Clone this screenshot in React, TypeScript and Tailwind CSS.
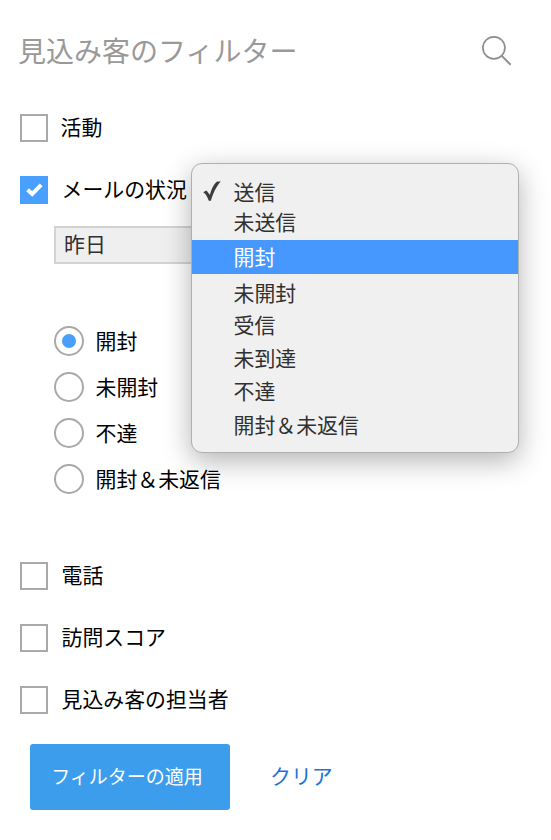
import { useState } from 'react';
import clsx from 'clsx';

const MENU_OPTIONS = [
  { label: '送信', height: 'h-[31px] pb-0.5' },
  { label: '未送信', height: 'h-8 pb-1' },
  { label: '開封', height: 'h-[34px] pb-px mb-[3px]' },
  { label: '未開封', height: 'h-[33px] pb-0.5' },
  { label: '受信', height: 'h-[33px] pb-1' },
  { label: '未到達', height: 'h-[33px] pb-1' },
  { label: '不達', height: 'h-[33px] pb-1' },
  { label: '開封＆未返信', height: 'h-[33px] pb-0.5' },
];

const EMAIL_STATES = ['開封', '未開封', '不達', '開封＆未返信'];

interface FilterRowProps {
  label: string;
  checked: boolean;
  onToggle: () => void;
  labelClassName?: string;
}

function FilterRow({ label, checked, onToggle, labelClassName = 'ml-[13.5px]' }: FilterRowProps) {
  return (
    <button
      type="button"
      role="checkbox"
      aria-checked={checked}
      onClick={onToggle}
      className="flex h-7 items-center text-black"
    >
      <span
        className={clsx(
          'flex size-7 shrink-0 items-center justify-center',
          checked ? 'bg-[#489ffe]' : 'border-2 border-[#a9a9a9] bg-white'
        )}
      >
        {checked && (
          <svg width="28" height="28" viewBox="0 0 28 28" fill="none" stroke="#fff" strokeWidth="4">
            <path d="M7.6 13.8L12.2 18L21.2 8.8" />
          </svg>
        )}
      </span>
      <span className={clsx('pb-[3px] leading-[25px] whitespace-nowrap', labelClassName)}>{label}</span>
    </button>
  );
}

function StatusMenu() {
  const [active, setActive] = useState(2);

  return (
    <ul className="absolute -top-[63px] left-[137px] z-10 w-[328px] rounded-[11px] border border-[#b0b0b0] bg-[#f0f0f0] pt-[13px] pb-[10px] text-[#303030] shadow-[0_8px_28px_rgba(0,0,0,0.3)]">
      {MENU_OPTIONS.map((option, i) => (
        <li
          key={option.label}
          onMouseEnter={() => setActive(i)}
          className={clsx(
            'flex items-center whitespace-nowrap',
            option.height,
            i === active && 'bg-[#4698ff] text-white'
          )}
        >
          <span className="w-[41.5px] shrink-0 pl-[11px]">
            {i === 0 && (
              <svg width="18" height="21" viewBox="0 0 18 21" fill="#3c3c3e" className="-mt-px">
                <path d="M0.3 11.2L3.2 9.4C4.8 10.8 5.8 12.2 6.8 14C8.3 8.2 10.6 3.6 13.4 1C14.4 0.2 16 0.4 17.8 0.4C13.4 5 10 12.2 7.9 19.8H5.8C4.6 16.2 2.8 12.8 0.3 11.2Z" />
              </svg>
            )}
          </span>
          {option.label}
        </li>
      ))}
    </ul>
  );
}

export default function App() {
  const [filters, setFilters] = useState<Record<string, boolean>>({ email: true });
  const [emailState, setEmailState] = useState('開封');

  const toggle = (key: string) => setFilters(prev => ({ ...prev, [key]: !prev[key] }));

  return (
    <div className="h-[840px] w-[551px] overflow-hidden bg-white font-['Noto_Sans_CJK_JP',sans-serif] text-[20.9px]">
      <header className="flex h-[102px] items-center justify-between pr-[38px] pl-[18px]">
        <h1 className="pb-0.5 text-[28px] leading-10 whitespace-nowrap text-[#999]">見込み客のフィルター</h1>
        <button type="button" aria-label="検索">
          <svg width="32" height="32" viewBox="0 0 32 32" fill="none" stroke="#8f8f8f" strokeWidth="1.7">
            <circle cx="12.9" cy="12.8" r="11" />
            <path d="M20.6 20.6L29.6 29.8" strokeWidth="2" />
          </svg>
        </button>
      </header>

      <main className="pl-5">
        <div className="mt-3 flex flex-col items-start gap-[34px]">
          <FilterRow label="活動" checked={!!filters.activity} onToggle={() => toggle('activity')} labelClassName="ml-[12.5px]" />
          <FilterRow label="メールの状況" checked={!!filters.email} onToggle={() => toggle('email')} />
        </div>

        <section className="mt-[22px] ml-[34px]">
          <div className="relative">
            <div className="flex h-[38px] w-[280px] items-center border-2 border-[#d3d3d3] bg-[#efefef] pb-0.5 pl-2 text-[#303030]">
              昨日
            </div>
            <StatusMenu />
          </div>

          <div className="mt-[62px] flex flex-col items-start gap-4">
            {EMAIL_STATES.map(state => (
              <button
                key={state}
                type="button"
                role="radio"
                aria-checked={emailState === state}
                onClick={() => setEmailState(state)}
                className="flex h-[30px] items-center text-black"
              >
                <span className="flex size-[30px] items-center justify-center rounded-full border-2 border-[#a9a9a9] bg-white">
                  {emailState === state && <span className="size-[14px] rounded-full bg-[#489ffe]" />}
                </span>
                <span className="ml-[11.5px] pb-0.5 leading-7 whitespace-nowrap">{state}</span>
              </button>
            ))}
          </div>
        </section>

        <div className="mt-[68px] flex flex-col items-start gap-[34px]">
          <FilterRow label="電話" checked={!!filters.phone} onToggle={() => toggle('phone')} />
          <FilterRow label="訪問スコア" checked={!!filters.score} onToggle={() => toggle('score')} />
          <FilterRow label="見込み客の担当者" checked={!!filters.owner} onToggle={() => toggle('owner')} />
        </div>

        <footer className="mt-[30px] ml-[10px] flex items-center">
          <button type="button" className="h-[66px] w-[200px] rounded-[3px] bg-[#3d9ded] pr-1.5 pb-0.5 text-[19px] whitespace-nowrap text-white">
            フィルターの適用
          </button>
          <button type="button" className="ml-10 pb-0.5 whitespace-nowrap text-[#1f72d8]" onClick={() => setFilters({})}>
            クリア
          </button>
        </footer>
      </main>
    </div>
  );
}
